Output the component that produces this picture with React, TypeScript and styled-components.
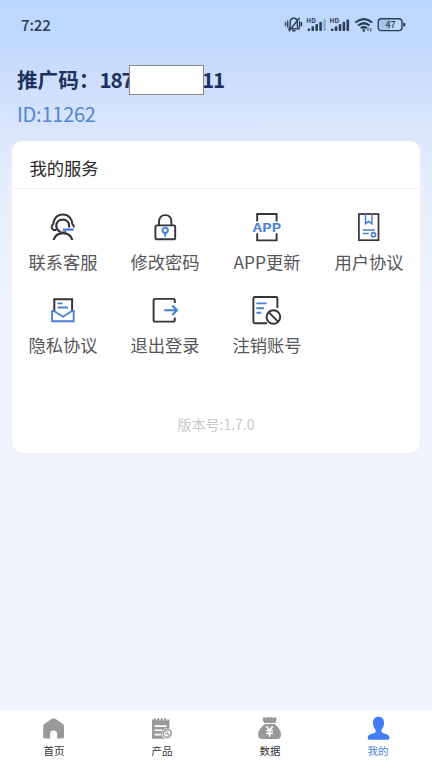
import React from 'react';
import styled, { createGlobalStyle } from 'styled-components';

const GlobalStyle = createGlobalStyle`
  * { box-sizing: border-box; }
  body { margin: 0; }
  body, text { font-family: "Noto Sans CJK SC", "Noto Sans", sans-serif; }
`;

const INK = '#353539';
const BLUE = '#4a80d6';
const GREY = '#999';

const Screen = styled.div`
  width: 432px;
  height: 768px;
  display: flex;
  flex-direction: column;
  overflow: hidden;
  background: linear-gradient(180deg, #bcd7fe 0, #c0d8fe 40px, #cbddfc 70px, #d9e6fc 130px, #e6eefd 200px, #eff4fe 300px, #f0f4fe 480px, #f0f4fe 100%);
`;

const StatusBar = styled.header`
  height: 50px;
  flex: none;
  display: flex;
  justify-content: space-between;
  padding: 0 24px 0 21px;
  color: #2c3c55;
`;

const Clock = styled.span`
  font-size: 15px;
  font-weight: 500;
  line-height: 49px;
  letter-spacing: -0.1px;
`;

const StatusIcons = styled.svg`
  margin-top: 12px;
  width: 124px;
  height: 26px;
`;

const Profile = styled.section`
  height: 91px;
  flex: none;
  padding: 14px 17px 0;
`;

const PromoRow = styled.div`
  display: flex;
  align-items: center;
  height: 32px;
  font-size: 20.6px;
  font-weight: 700;
  line-height: 30px;
  color: #1d3161;
  white-space: nowrap;
`;

const PromoText = styled.span`
  margin-top: -3px;
`;

const Digits = styled(PromoText)`
  letter-spacing: -1.1px;
`;

const Mask = styled.span`
  position: relative;
  flex: none;
  width: 75px;
  height: 30px;
  margin: 0 -2px 0 -3.5px;
  background: #fff;
  border: 1px solid #87898e;
`;

const UserId = styled.div`
  height: 36px;
  line-height: 36px;
  font-size: 20px;
  letter-spacing: -0.25px;
  color: #5484d3;
`;

const Card = styled.main`
  height: 312px;
  flex: none;
  margin: 0 12px;
  display: flex;
  flex-direction: column;
  background: #fff;
  border-radius: 11px;
  box-shadow: 0 2px 8px rgba(246, 240, 250, 0.9);
`;

const CardTitle = styled.h2`
  margin: 0;
  height: 48px;
  padding: 0 17.5px;
  line-height: 54px;
  font-size: 17.3px;
  font-weight: 400;
  color: #29292b;
  border-bottom: 1px solid #f2f2f4;
`;

const Services = styled.div`
  display: grid;
  grid-template-columns: repeat(4, 1fr);
  grid-auto-rows: 83px;
  padding-top: 20px;
`;

const Service = styled.div`
  display: flex;
  flex-direction: column;
  align-items: center;
`;

const ServiceIcon = styled.svg`
  width: 36px;
  height: 36px;
  fill: none;
  stroke: ${INK};
  stroke-width: 1.9;
  .b { stroke: ${BLUE}; }
`;

const ServiceLabel = styled.span`
  line-height: 34px;
  font-size: 17.3px;
  color: #565659;
`;

const Version = styled.div`
  margin-top: auto;
  height: 58px;
  line-height: 58px;
  text-align: center;
  font-size: 14px;
  color: #c8c8ca;
`;

const TabBar = styled.nav`
  height: 58px;
  flex: none;
  margin-top: auto;
  padding-top: 6px;
  display: grid;
  grid-template-columns: repeat(4, 1fr);
  background: #fff;
`;

const Tab = styled.div<{ $active?: boolean }>`
  display: flex;
  flex-direction: column;
  align-items: center;
  line-height: 22px;
  font-size: 10.5px;
  color: ${(p) => (p.$active ? '#4c84d8' : '#353535')};
`;

const TabIcon = styled.svg`
  width: 24px;
  height: 24px;
  fill: ${GREY};
`;

const services = [
  {
    label: '联系客服',
    icon: (
      <>
        <path d="M8.2 15.6C8.4 9.5 12.2 5.5 17.8 5.5S27.2 9.5 27.4 15.6" strokeWidth="2" />
        <path d="M8.4 15.2Q6.7 16 6.7 18T8.5 20.9H11.2M27.2 15.2Q28.9 16 28.9 18.6" strokeWidth="2" />
        <path d="M15.2 22.6C12.6 21.5 11.3 19.3 11.3 16.8C11.3 13 14.1 10.6 17.7 10.6S24.1 13 24.1 16.8V18.4" strokeWidth="2.2" />
        <path d="M14.6 22.6Q17.6 24 21 22.6" strokeWidth="1.4" />
        <path d="M8.6 31C10 26.5 13 24.2 18 24.2S26 26.5 27.4 31" strokeWidth="2.2" />
        <path className="b" d="M17.8 20.6H28.6" strokeWidth="2.4" />
      </>
    ),
  },
  {
    label: '修改密码',
    icon: (
      <>
        <rect x="8.4" y="16.4" width="19.8" height="13.9" rx="1.6" />
        <path d="M12 16.4V13C12 8.5 14.4 6.1 18.2 6.1S24.4 8.5 24.4 13V16.4" />
        <circle className="b" cx="18.2" cy="21.3" r="2.7" strokeWidth="1.9" />
        <path className="b" d="M18.2 23.8V27.8" strokeWidth="1.9" />
      </>
    ),
  },
  {
    label: 'APP更新',
    icon: (
      <>
        <path d="M8.2 12.6V5H27.6V12.6M8.2 24.3V31.4H27.6V24.3" strokeWidth="1.9" />
        <text x="3.7" y="22.9" textLength="28.6" lengthAdjust="spacingAndGlyphs" fontSize="11.6" fontWeight="700" fill={BLUE} stroke="none">APP</text>
      </>
    ),
  },
  {
    label: '用户协议',
    icon: (
      <>
        <rect x="7.9" y="5" width="19.6" height="26.2" strokeWidth="1.7" />
        <path className="b" d="M14.5 5V14.8L17.7 12.3L20.9 14.8V5" strokeWidth="1.5" />
        <path className="b" d="M11.7 21H24M11.7 24.4H17.7" strokeWidth="1.5" />
        <circle className="b" cx="22.5" cy="25.7" r="2.1" strokeWidth="1.6" />
      </>
    ),
  },
  {
    label: '隐私协议',
    icon: (
      <>
        <path d="M9.3 20V7.2H27.1V20" strokeWidth="2" />
        <path className="b" d="M9 19H7.1V29.3H28.7V19H27L18 24.7L9 19" />
        <path className="b" d="M12.5 11.4H17.6M12.5 15.5H23" />
      </>
    ),
  },
  {
    label: '退出登录',
    icon: (
      <>
        <path d="M27.8 11V8.4Q27.8 6.9 26.3 6.9H8.2Q6.6 6.9 6.6 8.4V28Q6.6 29.6 8.2 29.6H26.3Q27.8 29.6 27.8 28V25.4" />
        <path className="b" d="M17.2 18.3H29.6M25.3 13.5L30 18.3L25.3 23.1" strokeWidth="2.1" />
      </>
    ),
  },
  {
    label: '注销账号',
    icon: (
      <>
        <path d="M28.4 16V6.4Q28.4 5 27 5H5.8Q4.4 5 4.4 6.4V29.8Q4.4 31.2 5.8 31.2H18" />
        <path className="b" d="M7.4 11.4H17.5M7.4 16.2H15M7.4 20.8H12.3" />
        <circle cx="24.4" cy="25" r="6.8" />
        <path d="M19.7 20.2L29.2 29.8" />
      </>
    ),
  },
];

const tabs = [
  {
    label: '首页',
    icon: <path d="M10 2.7Q11.6 1.6 13.2 2.7L21 8Q22 8.8 22 10V20.7Q22 22.6 20 22.6H15.1V17.8C15.1 13.5 8.1 13.5 8.1 17.8V22.6H3.2Q1.2 22.6 1.2 20.7V10Q1.2 8.8 2.2 8Z" />,
  },
  {
    label: '产品',
    icon: (
      <>
        <path d="M2 3.6H4.2V2.2H5.8L6.5 5.4L7.3 2.2H9.2L10 5.4L10.8 2.2H12.6L13.4 5.4L14.2 2.2H16L16.8 5.4L17.4 3.6H19.4V22.7H2Z" />
        <path d="M4.5 10.1H16.6M4.5 14.2H12M4.5 18.6H11" stroke="#fff" strokeWidth="1.6" />
        <circle cx="17.2" cy="17.5" r="5.5" fill="#fff" />
        <circle cx="17.2" cy="17.4" r="4" fill="none" stroke={GREY} strokeWidth="1.6" />
        <circle cx="16.6" cy="16.8" r="1.3" fill="none" stroke={GREY} strokeWidth="1" />
        <path d="M17.5 17.7L19.8 20" fill="none" stroke={GREY} strokeWidth="1.2" />
      </>
    ),
  },
  {
    label: '数据',
    icon: (
      <>
        <path d="M4.8 1.8Q6.6 .5 8.2 1.9Q10 .2 11.8 1.8Q13.6 .2 15.2 1.9Q17 .5 18.5 1.8Q19 4.5 17.3 7H6.1Q4.2 4.5 4.8 1.8Z" />
        <path d="M7 7.9H16.5C20 10.5 23 14.5 23 18.4Q23 23 18.5 23H4.7Q.1 23 .1 18.4C.1 14.5 3.2 10.5 7 7.9Z" />
        <path d="M8.5 10.2L11.6 14.4L14.7 10.2M8.2 14.5H15M8.2 17.3H15M11.6 14V20.8" fill="none" stroke="#fff" strokeWidth="1.7" />
      </>
    ),
  },
  {
    label: '我的',
    active: true,
    icon: <path fill="#437df5" d="M12.5.8C16.4.8 18.1 3.4 18 7C17.9 10 17 12.4 15.5 13.8V16C16.5 18 23.5 17.3 23.5 22Q23.5 23.7 22 23.7H3.2Q1.7 23.7 1.7 22C1.7 17.3 8.8 18 9.6 16V13.8C8 12.4 7.1 10 7 7C6.9 3.4 8.7.8 12.5.8Z" />,
  },
];

const Signal = ({ x, dimLast }: { x: number; dimLast?: boolean }) => (
  <g>
    <text x={x - 0.8} y="10.8" fontSize="6.6" fontWeight="700" textLength="9.6" lengthAdjust="spacingAndGlyphs">HD</text>
    {[0, 1, 2, 3, 4].map((i) => (
      <rect
        key={i}
        x={x + 0.6 + i * 3.9}
        y={16.4 - i * 2.2}
        width="2.6"
        height={2.6 + i * 2.2}
        rx=".9"
        opacity={dimLast && i === 4 ? 0.3 : 1}
      />
    ))}
  </g>
);

export default function App() {
  return (
    <>
      <GlobalStyle />
      <Screen>
        <StatusBar>
          <Clock>7:22</Clock>
          <StatusIcons viewBox="0 0 124 26" fill="#2c3c55">
            <g fill="none" stroke="#2c3c55" strokeWidth="1.4" strokeLinecap="round">
              <path d="M5 16.8H14.8L13.4 14.4V10.8C13.4 7.5 11.9 6.2 9.8 6.2S6.2 7.5 6.2 10.8V14.4L5 16.8ZM8.6 18.8H11M5.2 18.8L15.3 6.2" />
              <path d="M3.7 9V15M1.5 10.6V13.6M15.7 9.5V15M17.5 10.8V13.6" />
            </g>
            <Signal x={23} dimLast />
            <Signal x={46.3} />
            <g fill="none" stroke="#2c3c55" strokeWidth="2.2">
              <path d="M71.4 10.5Q80 3.7 88.2 10.5" />
              <path d="M74.1 13.5Q79.9 9 85.5 13.5" />
              <path d="M76.8 16.2Q79.9 14 82.8 16.2" />
            </g>
            <circle cx="79.8" cy="18.4" r="1.3" />
            <path d="M84 15.5V19M86.8 16V19.4" stroke="#2c3c55" strokeWidth="1" />
            <rect x="95.4" y="8" width="11.5" height="9.8" rx="2" opacity=".15" />
            <rect x="94.2" y="6.8" width="23.8" height="11.8" rx="3.4" fill="none" stroke="#2c3c55" strokeWidth="1.4" />
            <path d="M119.2 10.6Q121.5 10.6 121.5 12.7T119.2 14.8Z" />
            <text x="101.5" y="16.1" fontSize="9" fontWeight="500" textLength="10" lengthAdjust="spacingAndGlyphs">47</text>
          </StatusIcons>
        </StatusBar>
        <Profile>
          <PromoRow>
            <PromoText>推广码：</PromoText>
            <Digits>187</Digits>
            <Mask />
            <Digits>11</Digits>
          </PromoRow>
          <UserId>ID:11262</UserId>
        </Profile>
        <Card>
          <CardTitle>我的服务</CardTitle>
          <Services>
            {services.map((s) => (
              <Service key={s.label}>
                <ServiceIcon viewBox="0 0 36 36">{s.icon}</ServiceIcon>
                <ServiceLabel>{s.label}</ServiceLabel>
              </Service>
            ))}
          </Services>
          <Version>版本号:1.7.0</Version>
        </Card>
        <TabBar>
          {tabs.map((t) => (
            <Tab key={t.label} $active={t.active}>
              <TabIcon viewBox="0 0 24 24">{t.icon}</TabIcon>
              {t.label}
            </Tab>
          ))}
        </TabBar>
      </Screen>
    </>
  );
}
